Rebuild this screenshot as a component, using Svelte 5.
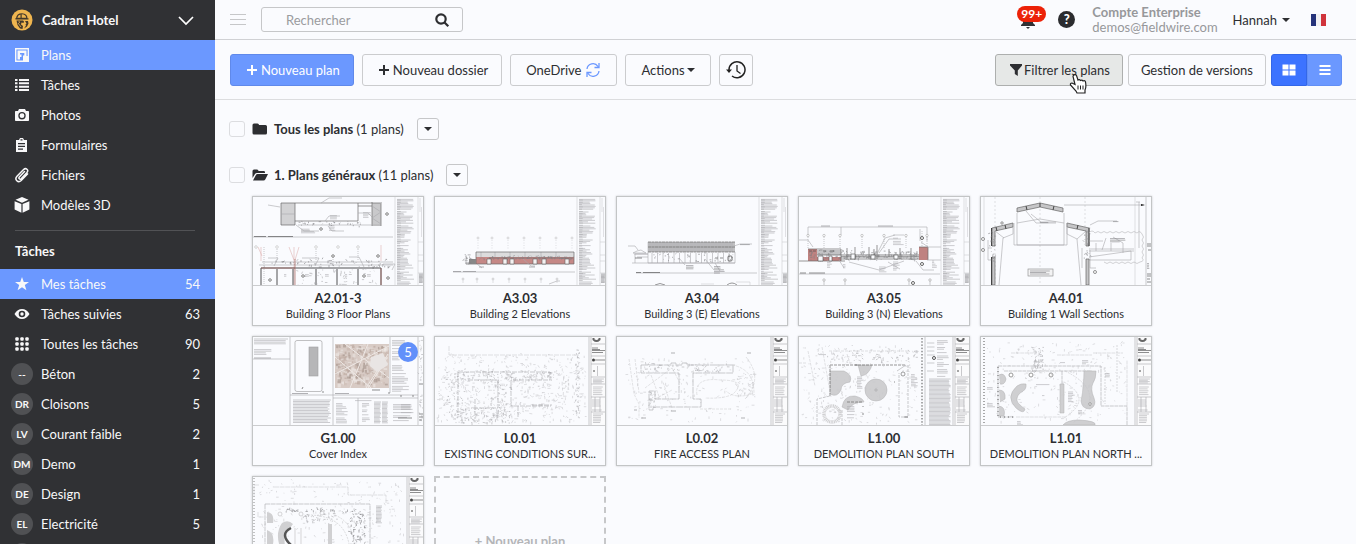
<script>
  const nav = [
    { icon: 'plan', label: 'Plans', active: true },
    { icon: 'list', label: 'Tâches' },
    { icon: 'camera', label: 'Photos' },
    { icon: 'clipboard', label: 'Formulaires' },
    { icon: 'clip', label: 'Fichiers' },
    { icon: 'cube', label: 'Modèles 3D' }
  ];

  const tasks = [
    { icon: 'star', label: 'Mes tâches', count: 54, active: true },
    { icon: 'eye', label: 'Tâches suivies', count: 63 },
    { icon: 'grid', label: 'Toutes les tâches', count: 90 },
    { tag: '--', label: 'Béton', count: 2 },
    { tag: 'DR', label: 'Cloisons', count: 5 },
    { tag: 'LV', label: 'Courant faible', count: 2 },
    { tag: 'DM', label: 'Demo', count: 1 },
    { tag: 'DE', label: 'Design', count: 1 },
    { tag: 'EL', label: 'Electricité', count: 5 },
    { tag: '', label: '', count: '' }
  ];

  const sheets = [
    { code: 'A2.01-3', name: 'Building 3 Floor Plans', art: 'floor' },
    { code: 'A3.03', name: 'Building 2 Elevations', art: 'elev2' },
    { code: 'A3.04', name: 'Building 3 (E) Elevations', art: 'elev3e' },
    { code: 'A3.05', name: 'Building 3 (N) Elevations', art: 'elev3n' },
    { code: 'A4.01', name: 'Building 1 Wall Sections', art: 'wall' },
    { code: 'G1.00', name: 'Cover Index', art: 'cover', badge: 5 },
    { code: 'L0.01', name: 'EXISTING CONDITIONS SUR...', art: 'survey' },
    { code: 'L0.02', name: 'FIRE ACCESS PLAN', art: 'fire' },
    { code: 'L1.00', name: 'DEMOLITION PLAN SOUTH', art: 'south' },
    { code: 'L1.01', name: 'DEMOLITION PLAN NORTH ...', art: 'north' },
    { code: '', name: '', art: 'east' }
  ];

  function random(seed) {
    let s = seed;
    return () => {
      s = (s * 16807) % 2147483647;
      return s / 2147483647;
    };
  }

  // Rows of small print with ragged right edges and paragraph breaks.
  function print(x, y, w, h, seed = 7, step = 1.6, ragged = 0.6) {
    const r = random(seed * 911);
    let d = '';
    for (let cy = y; cy < y + h; cy += step) {
      if (ragged > 0.3 && r() < 0.1) continue;
      const len = w * (1 - ragged * r());
      d += `M${x} ${cy.toFixed(1)}h${len.toFixed(1)}`;
    }
    return d;
  }

  // Short survey strokes spread over a rectangle.
  function strokes(x, y, w, h, n, seed, size = 3) {
    const r = random(seed * 1373);
    let d = '';
    for (let i = 0; i < n; i++) {
      const px = x + r() * w;
      const py = y + r() * h;
      const a = r() < 0.6 ? (r() < 0.5 ? 0 : Math.PI / 2) : r() * 6.3;
      const l = size * (0.2 + r() * 0.8);
      d += `M${px.toFixed(1)} ${py.toFixed(1)}l${(Math.cos(a) * l).toFixed(1)} ${(Math.sin(a) * l).toFixed(1)}`;
    }
    return d;
  }

  function blocks(x, y, w, h, n, seed) {
    const r = random(seed * 577);
    const tones = ['#b5a198', '#e9e2df', '#c6b4ab', '#f0ebe8', '#a3928a', '#d9cac3'];
    return Array.from({ length: n }, (_, i) => ({
      x: x + r() * (w - 4),
      y: y + r() * (h - 4),
      w: 1 + r() * 3,
      h: 1 + r() * 3,
      fill: tones[i % tones.length]
    }));
  }

  const aerial = blocks(82, 7, 54, 44, 340, 5);
</script>

{#snippet icon(name)}
  <svg class="icon" viewBox="0 0 16 16" width="16" height="16" aria-hidden="true">
    {#if name === 'plan'}
      <path fill="none" stroke="currentColor" stroke-width="1.400" d="M1.700 1.700h12.600v12.600H1.700z" />
      <path fill="currentColor" d="M3.500 3.500h9v5.500h2v5.500H9V8.500h1.300V6H6v1.500h1.500V10H6v2.500H3.500z" />
    {:else if name === 'list'}
      <path fill="currentColor" d="M1 2h2.500v2H1zM5 2h10v2H5zM1 5.300h2.500v2H1zM5 5.300h10v2H5zM1 8.700h2.500v2H1zM5 8.700h10v2H5zM1 12h2.500v2H1zM5 12h10v2H5z" />
    {:else if name === 'camera'}
      <path fill="currentColor" fill-rule="evenodd" d="M5 2h6l1 2h2.200q.8 0 .8.800v8.400q0 .8-.8.800H1.800q-.8 0-.8-.8V4.800q0-.8.8-.8H4zM8 5a3.700 3.700 0 1 0 0 7.400A3.700 3.700 0 1 0 8 5zm0 1.300a2.400 2.400 0 1 1 0 4.800 2.400 2.400 0 1 1 0-4.800z" />
    {:else if name === 'clipboard'}
      <path fill="currentColor" fill-rule="evenodd" d="M2 3h3l1-2h3l1 2h3v12H2zM4 6v1.200h7V6zM4 8.700v1.200h7V8.700zM4 11.500v1.200h5v-1.200zM6.500 2.200v1.300h2V2.200z" />
    {:else if name === 'clip'}
      <path fill="none" stroke="currentColor" stroke-width="1.500" stroke-linecap="round" d="M10.500 4.500 5.300 10c-1.100 1.300.6 2.900 1.800 1.700L13 5.500c2-2.300-1-5.300-3.400-3L3 9.300c-3 3.300 1.200 7 4.200 4.200l6.300-6.600" />
    {:else if name === 'cube'}
      <path fill="currentColor" d="m8 0 6.500 2.700L8 5.700 1.500 2.700zM.6 4.200 7.400 7v8.800L.6 12.600zM15.400 4.200 8.600 7v8.800l6.800-3.200z" />
    {:else if name === 'star'}
      <path fill="currentColor" d="m8 1 1.800 4.900h5.200l-4.200 3.200 1.600 5.200L8 11.200l-4.400 3.100 1.600-5.200L1 5.900h5.200z" />
    {:else if name === 'eye'}
      <path fill="currentColor" fill-rule="evenodd" d="M.5 8Q3.500 3 8 3t7.500 5Q12.500 13 8 13T.5 8zM8 4.700a3.300 3.300 0 1 0 0 6.600 3.300 3.300 0 1 0 0-6.600zm0 1.600a1.700 1.700 0 1 1 0 3.400 1.700 1.700 0 1 1 0-3.400z" />
    {:else if name === 'grid'}
      {#each [3, 8, 13] as x}{#each [3, 8, 13] as y}<rect x={x - 1.700} y={y - 1.700} width="3.400" height="3.400" rx="1" fill="currentColor" />{/each}{/each}
    {:else if name === 'plus'}
      <path fill="currentColor" d="M7 3h2v4h4v2H9v4H7V9H3V7h4z" />
    {:else if name === 'sync'}
      <g fill="none" stroke="#6b98ff" stroke-width="1.300"><path d="M2 7a6 6 0 0 1 11-2.500M14 1v4.500H9.500M14 9a6 6 0 0 1-11 2.500M2 15v-4.500h4.500" /></g>
    {:else if name === 'funnel'}
      <path fill="currentColor" d="M2 2h12v1.500L9.800 8.500V14l-3-2V8.500L2 3.500z" />
    {:else if name === 'folder'}
      <path fill="currentColor" d="M.5 4q0-1.500 1.500-1.500h3.500Q7 2.500 7 4h6.500Q15 4 15 5.500V12q0 1.500-1.500 1.500H2Q.5 13.500.5 12z" />
    {:else if name === 'folder-open'}
      <path fill="currentColor" d="M.5 11V4q0-1.500 1.500-1.500h3Q6.500 2.500 6.500 4h5.300q1.200 0 1.200 1.200V6H5Q3.700 6 3 7zM1 13.500l2.800-5.300q.6-1.200 1.700-1.200H16l-2.600 5.300q-.6 1.200-1.900 1.200z" />
    {:else if name === 'search'}
      <g fill="none" stroke="currentColor" stroke-width="2.200"><circle cx="7" cy="7" r="4.700" /><path d="m10.300 10.300 4 4" /></g>
    {:else if name === 'tiles'}
      <path fill="currentColor" d="M1.500 2.500h6v5h-6zM8.500 2.500h6v5h-6zM1.500 8.500h6v5h-6zM8.500 8.500h6v5h-6z" />
    {:else if name === 'rows'}
      <path fill="currentColor" d="M2.500 3h11v2h-11zM2.500 7h11v2h-11zM2.500 11h11v2h-11z" />
    {/if}
  </svg>
{/snippet}

{#snippet archMargin()}
  <path class="ln" d="M142 0v88M165 0v88" />
  <path class="tx" d={print(144, 1, 17, 87, 3, 1.400, 0.65)} />
  <path class="tx" d={print(144, 3, 4, 82, 11, 2.300, 0.3)} />
  <path class="tx dark" d={print(166, 77, 4, 9, 4, 1.200, 0.1)} />
  <path class="ln" d="M165 45h5M165 58h5M165 64h5M165 76h5M167 1v14M168.500 10v30" />
{/snippet}

{#snippet landMargin()}
  <rect x="154" width="16" height="88" fill="#fbfbfc" />
  <path class="ln mid" d="M154 0v88M156 0v88M156 7h14M156 19h14M156 27h14M156 40h14M156 47h14M156 60h14M156 75h14M162.500 29v10M160 60v15M165 60v15" />
  <path stroke="#666" stroke-width="2" fill="none" d="M158.500 1v1.500q3 3 6 0V1" />
  <path class="tx black" d="M157 11h6M157 12.500h8M157 13.500h13M157 15.500h11M160 23h10" />
  <circle cx="158.500" cy="23" r="1.500" fill="#444" />
  <circle cx="159" cy="34" r="1" fill="#888" />
  <path class="tx" d={print(158, 42, 11, 5, 6, 1.300, 0.2)} />
  <path class="tx" d={print(158, 50, 10, 8, 9, 1.900, 0.3)} />
  <path class="tx" d={print(157, 61, 12, 13, 8, 2, 0.4)} />
  <path class="tx" d={print(158, 77, 10, 9, 2, 1.700, 0.3)} />
{/snippet}

{#snippet drawing(art)}
  <svg class="art" viewBox="0 0 170 88" preserveAspectRatio="xMidYMid slice" aria-hidden="true">
    {#if art === 'floor'}
      <rect x="28" y="6" width="14" height="22" fill="#d2d2d4" />
      <rect x="119" y="6" width="9" height="23" fill="#c9c9cb" />
      <path class="dk" d="M28 6h99M28 6v22h14V6M42 24h63V6M105 9h14M128 5v24M119 5v24" />
      <path class="ln mid" d="M28 17h14M45 28h82M68 6l8-5h13M15 8l12 2M105 16h10l4 4M43 28l8 6h15M72 24l4-5h11M75 29l4 5h12M119 9l9 6-9 6 9 6" />
      <path class="tx" d={print(48, 31, 16, 5, 5, 1.200) + print(76, 27, 11, 8, 8) + print(77, 17, 12, 5, 2) + print(110, 14, 8, 8, 3)} />
      <path class="ln mid" d="M0 40h140" />
      <path class="tx black" d="M1 39.500h12M15 39.500h25" />
      <path class="tx dark" d={strokes(44, 24, 64, 5, 34, 9, 2)} />
      <g class="ln mid" stroke-dasharray="1 1"><path d="M24 50v13M63 50v13M80 58v12M105 50v13M11 50v38" /></g>
      <g fill="#fff" stroke="#999" stroke-width=".4"><circle cx="3" cy="50" r="1.300" /><circle cx="24" cy="50" r="1.300" /><circle cx="63" cy="50" r="1.300" /><circle cx="85" cy="50" r="1.300" /><circle cx="105" cy="50" r="1.300" /></g>
      <path fill="none" stroke="#dfb3b1" stroke-width=".6" d="M5 50l4 9M8 50v14M36 50l5 13M41 50v38M46 50l-4 13M128 48v16" />
      <path class="ln mid" d="M9 65h131M6 68h134M15 61h10l-4 8M49 61h17l-4 8M96 60h10l5 10M130 67h12l-3 6" />
      <path class="tx dark" d={strokes(8, 62, 130, 8, 60, 21, 3)} />
      <path class="heavy" d="M8 88V71h120v17M24 72v16M40 72v16M63 72v16M84 72v16M105 72v16" />
      <path fill="none" stroke="#a56460" stroke-width=".7" d="M42 62v26M8 71h34M128 71v17" />
      <path class="tx" d={print(31, 76, 4, 4, 2) + print(52, 76, 4, 4, 3) + print(72, 76, 5, 4, 4) + print(92, 76, 4, 4, 5) + print(114, 76, 4, 4, 6) + strokes(44, 72, 80, 16, 50, 14, 3)} />
      {#each [[17, 83], [50, 79], [68, 32], [80, 59], [111, 79], [125, 59], [134, 17], [135, 81]] as [x, y]}
        <path d="M{x - 1.500} {y}l1.500-1.500 1.500 1.500-1.500 1.500z" fill="#fff" stroke="#555" stroke-width=".9" />
      {/each}
      {@render archMargin()}
    {:else if art === 'elev2'}
      <path class="ln" stroke-dasharray="1 1.500" d="M43 43v10M57 43v10M73 43v10M89 43v10M105 43v10M121 43v10M137 43v10" />
      <g fill="#fff" stroke="#b3b3b5" stroke-width=".5">{#each [43, 57, 73, 89, 105, 121, 137] as x}<circle cx={x} cy="41" r="1" /><circle cx={x - 15} cy="82" r="1" />{/each}</g>
      <path class="ln" d="M28 81v5M42 81v5M58 81v5M74 81v5M90 81v5M106 81v5M122 81v5" />
      <rect x="41" y="55" width="98" height="5" fill="#dcdcdd" />
      <path class="tx" d="M46 55v5M60 55v5M75 55v5M90 55v5M106 55v5M121 55v5" />
      <rect x="41" y="60" width="98" height="7" fill="#c58886" />
      <path class="dk" d="M41 55h98v12H31M41 55v12M54 61h84" />
      <rect x="34" y="62" width="7" height="5" fill="#888" />
      <path class="tx dark" d={strokes(41, 59, 97, 3, 85, 8, 2) + strokes(29, 55, 7, 11, 16, 6, 3)} />
      {#each [52, 68, 75, 98, 107, 130] as x}<path d="M{x} 62h4v5h-4z" fill="#f5f1f1" stroke="#666" stroke-width=".6" />{/each}
      <path class="ln mid" d="M18 75h122M42 67l5 4M88 62l8 7h4M114 87l8-3h3M31 58v9" />
      <path class="tx dark" d="M18 74.500h8M28 74.500h13M44 70h5M94 70h6" />
      {@render archMargin()}
    {:else if art === 'elev3e'}
      <rect x="31" y="45" width="87" height="10" fill="#c0c0c2" />
      <path stroke="#a2a2a4" stroke-width=".5" d={Array.from({ length: 43 }, (_, i) => `M${31 + i * 2} 45v10`).join('')} />
      <path class="dk" stroke-dasharray="3 .5" d="M31 45h87M31 55h87M31 50h87" />
      <path class="ln mid" d="M31 55v11h87V55M15 66h103M18 66V57h13M17 57h14M20 60h11M16 56h13l-5-3-4 1z" />
      <path class="ln mid" d={Array.from({ length: 15 }, (_, i) => `M${35 + i * 5.500} 56v10`).join('')} />
      <path class="tx dark" d={strokes(33, 56, 84, 9, 42, 15, 2)} />
      <path class="tx black" d="M98 61h3M103 61h3M18 61h7" />
      <rect x="111" y="59" width="4" height="5" rx="1" fill="none" stroke="#555" stroke-width=".8" />
      <path class="ln mid" d="M19 76h121M21 53l-3-4h-7M114 50l9-3h12M62 61l6 7M88 62l9 11M98 66l5 8" />
      <path class="tx dark" d={print(69, 67, 10, 5, 4) + print(97, 68, 12, 9, 5) + print(123, 46, 14, 3, 7)} />
      <path class="tx black" d="M19 75.500h5M26 75.500h17" />
      <path class="dk" d="M38 88q5-3 10 0M110 88q5-4 10 0" />
      <path class="ln" d="M84 87h13M119 85h14v3" />
      {@render archMargin()}
    {:else if art === 'elev3n'}
      <path class="ln mid" d="M9 38v-8h119v14M42 30v8M121 44V32" />
      <path class="tx dark" d="M22 29h9M79 29h15" />
      <path class="ln mid" stroke-dasharray="1 1" d="M9 40v12M25 40v12M41 40v12M63 40v12M85 40v12M107 40v12M123 34v18M128 40v12" />
      <g fill="#fff" stroke="#999" stroke-width=".5">{#each [9, 25, 41, 63, 85, 107, 128] as x}<circle cx={x} cy="38.500" r="1.200" />{/each}</g>
      <path fill="#bf8280" d="M9 52h9v12H9zM18 60h24v4H18zM120 50h9v13h-9z" />
      <path fill="#c3c3c5" d="M18 53h24v5H18zM42 57h78v3H42z" />
      <path class="dk" d="M0 64h46M9 52h33v12M18 58h24M42 62h78M120 50h9v13M42 60h78" />
      <path class="dk" d="M48 51v12M56 50v13M70 50v12M75 52v10M78 48v14M90 52v8M101 51v11M112 51v11" />
      <path class="tx dark" d={strokes(44, 54, 76, 9, 110, 25, 3) + strokes(8, 53, 34, 10, 40, 12, 3)} />
      <g fill="#fafbfe" stroke="#555" stroke-width=".6"><path d="M19 59h5v5h-5zM30 59h3v5h-3zM52 57h4v5h-4zM72 58h4v4h-4zM95 58h4v4h-4z" /></g>
      <path class="ln mid" d="M0 43h9l5 7M76 61l10-20 10-3M80 56l10-14h12M50 65l30 8 25-9M40 63l5 8M89 65l12 7M117 64l7 9h11M122 45l7 5M128 50h14M128 63h14M0 77h141" />
      <path class="tx" d={print(94, 38, 12, 11, 17) + print(80, 70, 8, 5, 16) + print(28, 64, 5, 7, 15) + print(44, 66, 5, 6, 8) + print(94, 65, 7, 8, 15) + print(133, 64, 5, 7, 18)} />
      <path class="tx black" d="M1 76h6M10 76h16M10 54h3M14 54h3M31 54h4M24 54h3" />
      <g fill="#fff" stroke="#555" stroke-width=".9"><circle cx="123" cy="41" r="1.500" /><circle cx="114" cy="86" r="1.500" /><circle cx="123" cy="67" r="1.500" /></g>
      <path class="ln mid" d="M25 83v5M46 83v5M110 83v5M131 83v5" />
      <g fill="#fff" stroke="#888" stroke-width=".5">{#each [25, 46, 110, 131] as x}<circle cx={x} cy="83" r="1.200" />{/each}</g>
      {@render archMargin()}
    {:else if art === 'wall'}
      <path class="ln" d="M3 0v88M154 0v88" />
      <path class="ln" stroke-dasharray="2 2" d="M14 0v88M59 0v88M104 0v30" />
      <path fill="#c6c6c8" stroke="#666" stroke-width=".7" d="M11 88V60h3v28zM11 49V31l21-5v4l-18 4v15zM36 11l23-5 23 5v4L59 10l-23 5zM86 26l22 5v18h-3V34l-19-4zM105 62h3v26h-3z" />
      <path stroke="#444" d="M10.500 31v18M10.500 60v28M108 31v18M15 30l1 4M24 28l1 4M45 9l1 4M59 6v4M73 9l-1 4M97 28l-1 4" />
      <path class="ln mid" d="M36 16v32h47V16M36 26l23-4 24 4M33 26v22h53V26M32 30v7l-10 4-4 47M86 30v7l10 5 4 46M14 34l9 7M105 34l-9 8M50 17l10 8h15M45 14l10 12h20" />
      <path class="tx dark" d={print(59, 24, 10, 3, 12) + strokes(9, 29, 6, 35, 30, 2, 2) + strokes(103, 30, 6, 34, 30, 3, 2)} />
      <rect x="47" y="72" width="25" height="7" fill="#f3f3f4" stroke="#888" stroke-width=".6" />
      <path class="tx dark" d={print(49, 74, 20, 4, 6, 1.500, 0.2)} />
      <path fill="none" stroke="#b5b5b8" stroke-width=".6" d="M108 36q3-4 6 0q3-3 6 0q3-3 6 0q3-3 6 0q3-3 6 0q3-3 6 0q3-3 6 0q3-3 6 0q3-3 5 1q3 3 0 6q3 3 0 6q3 3 0 6q3 3 0 6q3 3-2 4q-3 3-6 0q-3 3-6 0q-3 3-6 0q-3 3-6 0q-3 3-6 0q-3 3-6 0" />
      <path class="ln mid" d="M83 8h80M108 52h45M108 54h45" />
      <path class="ln mid" d="M108 60l42-6M108 63h42v-9M108 44h14M132 40l10 6v10M125 41l-4 12M109 28l8-4h19M7 43v20h3M7 51h4M109 53v18h6M101 51v20M115 46v8M130 46v8M155 5h4M158 5v46" />
      <path class="tx dark" d={print(129, 40, 17, 7, 9) + print(132, 23, 12, 2, 11)} />
      <g fill="#fff" stroke="#666" stroke-width=".7"><circle cx="2" cy="42" r="1.500" /><circle cx="2" cy="53" r="1.500" /><circle cx="114" cy="75" r="1.500" /><circle cx="21" cy="26" r="1.200" /></g>
      <path d="m160 7 4 1-4 1z" fill="#222" />
      <path class="ln mid" d="M165 0v88" />
      <path class="tx black" d="M166 47h4M166 49h4M167 53h3M166 77h4M166 79h4M166 82h3M166 85h4" />
      <path class="tx dark" d={print(166, 65, 4, 9, 8)} />
    {:else if art === 'cover'}
      <path class="ln mid" d="M37 0v88M80 0v88M137 0v56M0 22h37M37 58h128M165 0v88M80 61h85M105 61v27" />
      <path class="tx" d={print(1, 2, 34, 6, 2, 1.600, 0.1) + print(1, 11, 18, 8, 3, 1.600) + print(40, 63, 38, 24, 4, 1.500, 0.1)} />
      <path class="tx dark" d="M1 21h17M39 56.500h16M82 56.500h14" />
      <rect x="42" y="3.500" width="27" height="51" rx="2" fill="none" stroke="#999" stroke-width=".6" />
      <rect x="56" y="10" width="9" height="29" fill="#b6b6b8" stroke="#a0a0a2" stroke-width=".6" />
      <path class="tx black" d="M49 52l1-2M69 55h2" />
      <rect x="82" y="7" width="54" height="44" fill="#d8cbc5" />
      {#each aerial as b}<rect x={b.x} y={b.y} width={b.w} height={b.h} fill={b.fill} opacity=".6" />{/each}
      <path stroke="#eee8e5" fill="none" d="M82 37l54-28M97 51l18-44M113 51l22-34M82 20l36 31M92 7l44 34M115 51l19-30" />
      <path fill="#e9e5e4" d="m118 20 12-4 5 12-11 7-7-6z" />
      <path class="tx black" d="M119 53h8M135 56h2" />
      <path class="tx" d={print(139, 2, 14, 22, 6) + print(139, 27, 20, 28, 8) + print(83, 65, 12, 22, 5) + print(102, 62, 18, 3, 6) + print(109, 65, 8, 21, 9) + print(121, 65, 7, 22, 4, 1.300, .2) + print(129, 65, 6, 22, 10, 1.300, .2) + print(140, 66, 20, 18, 6) + print(148, 66, 16, 11, 2) + strokes(166, 1, 3, 83, 40, 3, 2)} />
      <path class="tx black" d="M148 58v2M160 58v2M166 77h4M166 80h4M166 83h3M166 47h4M145 81h14" />
    {:else if art === 'survey'}
      <path class="tx light" d={strokes(2, 17, 148, 68, 470, 31, 3) + strokes(15, 35, 120, 50, 160, 45, 4)} />
      <path class="tx" d={strokes(9, 32, 20, 54, 75, 32, 2) + strokes(55, 34, 22, 48, 75, 36, 2) + strokes(140, 12, 5, 70, 65, 37, 2) + strokes(22, 34, 93, 9, 70, 38, 3) + strokes(24, 71, 50, 15, 85, 47, 3)} />
      <path class="ln mid" stroke-dasharray="5 1" d="M23 35h92v8H76v26h40M23 35v43M33 43h30v28H36M40 62v20M83 69v12M97 68h20" />
      <path class="ln" stroke-dasharray="5 1" d="M14 9v9h130" />
      {@render landMargin()}
    {:else if art === 'fire'}
      <path class="ln mid" stroke-dasharray="7 .7" d="M24 28h30v-2h5v2h6v-2h5v2h46v8H76v26h8v8H36v3h-4V54h6v8h24V36H24z" />
      <g fill="none" stroke="#c9c9cb" stroke-width=".5" stroke-dasharray="3 1"><path d="M12 22l5 35 5 10v14M18 22l4 34M28 51l27-20 8 15M38 62l17-9M80 58q-3-18 23-15 28 0 13 14-9 5-28 4M115 28q22 4 22 28-18 7-28-2M129 20q18 22-1 42M34 38l9 24M55 71l-9-26M83 72h32" /></g>
      <path class="tx light" d={strokes(10, 20, 130, 65, 170, 30, 3) + strokes(120, 36, 18, 24, 45, 17, 3)} />
      <path class="tx" d={strokes(25, 26, 86, 9, 55, 32, 3) + strokes(32, 54, 6, 17, 22, 13, 3)} />
      <path class="tx dark" d="M54 16h4M130 16h4M24 81h5M54 74h5M124 81h4M17 73h3" />
      {@render landMargin()}
    {:else if art === 'south'}
      <g fill="#cfcfd1" stroke="#b0b0b2" stroke-width=".5"><path d="M31 34h14q9 4 6 11-9 1-9 8-4 8-11 4zM59 28h14q-3 10-11 11zM43 70q2-12 13-11 8 2 9 6-12 0-16 8z" /><circle cx="77" cy="53" r="11" /></g>
      <path class="dk" stroke-dasharray="3 1" d="M31 28h75M31 28v32M48 65h16" />
      <path class="ln" stroke-dasharray="3 1" d="M23 10l9 50M9 14l7 35M0 26h8M30 14h80M48 17l4 12M80 17l5 12" />
      <path class="ln mid" stroke-dasharray="3 1" d="M109 28v52h-9V36M18 88V62l13-3M43 88V73" />
      <path class="tx light" d={strokes(2, 8, 116, 78, 260, 35, 3)} />
      <path class="tx" d={strokes(28, 12, 89, 12, 65, 38, 3) + print(58, 40, 7, 12, 15) + print(48, 68, 8, 13, 6) + print(112, 36, 7, 14, 5) + print(20, 16, 8, 3, 9)} />
      <circle cx="33" cy="77" r="8" fill="none" stroke="#d0d0d2" stroke-width="3.500" stroke-dasharray="1 .6" />
      <circle cx="104" cy="37" r="2" fill="none" stroke="#777" stroke-width=".7" />
      <path stroke="#555" stroke-dasharray="1.500 1.700" d="M123 1v87" />
      <path class="ln mid" d="M77 51v4M75 53h4M98 34l9-6M126 0v88" />
      <path class="tx black" d={print(48, 64, 16, 1, 2) + 'M56 28h3M64 69v1M64 76v2M109 80h-4M95 45h1'} />
      <path class="tx" d={print(128, 2, 8, 34, 6, 4) + print(138, 2, 12, 38, 9, 1.700)} />
      <circle cx="135" cy="21" r="1.500" fill="none" stroke="#555" />
      <path class="tx mid" d={print(130, 42, 22, 46, 13, 1.300, 0.12)} />
      {@render landMargin()}
    {:else if art === 'north'}
      <path stroke="#555" stroke-dasharray="1 2" d="M3 1v87" />
      <path class="ln mid" stroke-dasharray="4 .6" d="M17 29h103v40h26v19M17 29v51h16M23 34h88M81 34v42" />
      <path class="ln" stroke-dasharray="4 .6" d="M30 16h23V10M76 18h35M112 16h30M146 69V23M35 80h50" />
      <path stroke="#666" stroke-dasharray="1 3" d="M17 30v50h16" />
      <g fill="#cfcfd1" stroke="#b0b0b2" stroke-width=".5"><path d="M45 47q-5-1-9 2-12 11-1 22 8 7 9 1-3-2-7-6-3-5 2-10 7-3 6-9zM103 34h12q0 8-3 12-3 6 1 15 3 8-4 11-8 0-9-8 2-9 2-15 1-7 1-15zM79 47h4v29h-4zM82 88q4-5 16-5 18 1 16 5zM18 38q5-3 7 4-1 6-6 5M18 53q7 0 6 9l-5 3M18 69q7 1 5 10h-5" /></g>
      <g fill="#fff" stroke="#999"><circle cx="30" cy="38" r="2" /><circle cx="50" cy="38" r="2" /><circle cx="70" cy="38" r="2" /><circle cx="109" cy="67" r="1.300" /></g>
      <path class="tx light" d={strokes(6, 4, 139, 80, 240, 34, 3)} />
      <path fill="none" stroke="#c5c5c7" stroke-width=".6" stroke-dasharray="2 1" d="M83 45q30 17 0 36M84 34q45 22 8 52M124 30v37M136 8v48" />
      <path class="tx" d={print(87, 55, 7, 11, 15) + print(55, 46, 18, 2, 4) + print(6, 49, 8, 4, 7) + print(61, 57, 5, 3, 8) + print(101, 22, 7, 5, 9) + print(124, 35, 7, 6, 10) + print(36, 83, 8, 5, 11) + print(79, 24, 6, 3, 12) + strokes(50, 10, 12, 25, 60, 20, 3) + print(6, 65, 8, 5, 7) + print(97, 72, 7, 6, 2)} />
      {@render landMargin()}
    {:else}
      <path stroke="#888" stroke-dasharray="1 2" d="M1 1v87" />
      <path class="ln mid" stroke-dasharray="5 .6" d="M12 27h105v61M12 27v61" />
      <path class="ln" stroke-dasharray="5 .6" d="M21 10h74v8h38v8M6 8H1v12M5 35v5h6" />
      <path class="tx light" d={strokes(5, 3, 146, 83, 290, 42, 3)} />
      <path fill="#d0d0d2" d="M29 46q6-4 11 1l-3 4q-7 2-5 19h-5q-5-14 2-24zM14 35q8 1 6 11h-6M14 53q8 3 6 14h-6M75 47h4v24h-4z" />
      <path fill="none" stroke="#555" stroke-width="2.500" d="M38 51q-12 6 0 17" />
      <g fill="none" stroke="#c4c4c6" stroke-width=".7"><path d="M42 51v19M48 51v17" /><circle cx="27" cy="37" r="2" /><circle cx="48" cy="37" r="2" /><circle cx="69" cy="36" r="2" /></g>
      <path class="tx dark" d={strokes(97, 32, 15, 42, 75, 33, 3) + strokes(33, 32, 75, 3, 35, 34, 3)} />
      <path class="tx" d={print(123, 29, 6, 18, 5, 1.400, 0.2) + strokes(50, 35, 34, 9, 35, 44, 3)} />
      <path fill="none" stroke="#c6c6c8" stroke-dasharray="2 1" stroke-width=".6" d="M55 38q40 0 42 37M82 38q22 10 18 36" />
      {@render landMargin()}
    {/if}
  </svg>
{/snippet}

<div class="app">
  <aside class="sidebar">
    <button class="project">
      <svg viewBox="0 0 22 22" width="22" height="22" aria-hidden="true">
        <circle cx="11" cy="11" r="10.500" fill="#efb54f" />
        <path fill="#43382a" d="M4.500 10.500h13V9.300h-1Q16.500 4.500 11 4.200 5.500 4.300 5 9.300h-.8zM5.500 11.500 6.500 16l2.500 3.500 2.500.5.500-3-2-1.500.5-2 2 .5.500-1.500-1-1zM14 12l1.500 2.500-1 1 .5 1-2 3 3-2 1.500-3-.5-2.500z" />
        <path fill="#efb54f" d="M6.300 8.800Q7 5.800 9.500 5.400v3.400zM10.700 5.300q4.200 0 4.500 3.500h-4.500z" />
        <path fill="none" stroke="#efb54f" stroke-width=".8" d="m7 14 3 4M8 12l.5 2" />
      </svg>
      <span class="project-name">Cadran Hotel</span>
      <svg viewBox="0 0 16 16" width="16" height="16" aria-hidden="true"><path d="m1 5 7 7 7-7" fill="none" stroke="#fff" stroke-width="1.700" /></svg>
    </button>
    <nav>
      {#each nav as item}
        <a class="item" class:active={item.active} href="#{item.icon}">
          <span class="slot">{@render icon(item.icon)}</span>
          <span class="label">{item.label}</span>
        </a>
      {/each}
    </nav>
    <hr />
    <h2>Tâches</h2>
    <nav>
      {#each tasks as item, i}
        <a class="item" class:active={item.active} href="#liste-{i}">
          <span class="slot" class:tag={!item.icon}>{#if item.icon}{@render icon(item.icon)}{:else}{item.tag}{/if}</span>
          <span class="label">{item.label}</span>
          <span class="count">{item.count}</span>
        </a>
      {/each}
    </nav>
  </aside>

  <main>
    <header>
      <button class="bare burger" aria-label="Menu">
        <svg viewBox="0 0 16 12" width="16" height="12"><path d="M0 .5h16M0 5.500h16M0 10.500h16" stroke="#c6c7c9" /></svg>
      </button>
      <div class="search">
        <input type="text" placeholder="Rechercher" aria-label="Rechercher" />
        <button class="bare" aria-label="Lancer la recherche">{@render icon('search')}</button>
      </div>
      <div class="account">
        <button class="bare bell" aria-label="Notifications">
          <svg viewBox="0 0 16 16" width="16" height="16"><path fill="#303134" d="M3 2h10v7l2 2v1H1v-1l2-2zM6 13h4l-2 2z" /></svg>
          <span class="alert">99+</span>
        </button>
        <button class="bare help" aria-label="Aide">?</button>
        <div class="plan-info">
          <strong>Compte Enterprise</strong>
          <span>demos@fieldwire.com</span>
        </div>
        <button class="bare user">Hannah <i class="caret"></i></button>
        <svg class="flag" viewBox="0 0 15 12" width="15" height="12" aria-hidden="true">
          <rect width="5" height="12" fill="#26337a" /><rect x="5" width="5" height="12" fill="#f1f1f3" /><rect x="10" width="5" height="12" fill="#d0343c" />
        </svg>
      </div>
    </header>

    <div class="toolbar">
      <button class="btn create primary">{@render icon('plus')}Nouveau plan</button>
      <button class="btn create">{@render icon('plus')}Nouveau dossier</button>
      <button class="btn onedrive">OneDrive {@render icon('sync')}</button>
      <button class="btn menu">Actions<i class="caret"></i></button>
      <button class="btn square" aria-label="Historique">
        <svg viewBox="0 0 20 20" width="20" height="20"><path d="M3 10a8 8 0 1 1 3 6" fill="none" stroke="#222" stroke-width="1.500" /><path d="M11 5v6l3.500 2.500" fill="none" stroke="#222" stroke-width="1.300" /><path d="M0 9.500h6L3 13z" fill="#222" /></svg>
      </button>
      <div class="right">
        <button class="btn filter">
          {@render icon('funnel')}Filtrer les plans
          <svg class="pointer" viewBox="0 0 18 20" width="18" height="20" aria-hidden="true"><path d="M5 1q1.500-1 2.500.5L9 6q1.500-1 2.500.5 1.500-1 2.500.5 2-1 2.500 1 1 5-.5 8v3H8l-1-2-5.500-6q-.5-2 1.500-2l3 1.500L4 2.500Q4 1.500 5 1z" fill="#fff" stroke="#222" stroke-width="1.200" /><path d="M9 11.500v4M11.500 11.500v4M14 11.500v4" stroke="#222" /></svg>
        </button>
        <button class="btn">Gestion de versions</button>
        <div class="toggle">
          <button class="on" aria-label="Vue en grille">{@render icon('tiles')}</button>
          <button aria-label="Vue en liste">{@render icon('rows')}</button>
        </div>
      </div>
    </div>

    <section class="content">
      <div class="folder">
        <input type="checkbox" aria-label="Tous les plans" />
        {@render icon('folder')}
        <span class="folder-name"><b>Tous les plans</b> (1 plans)</span>
        <button class="drop" aria-label="Options du dossier"><i class="caret"></i></button>
      </div>
      <div class="folder">
        <input type="checkbox" aria-label="1. Plans généraux" />
        {@render icon('folder-open')}
        <span class="folder-name"><b>1. Plans généraux</b> (11 plans)</span>
        <button class="drop" aria-label="Options du dossier"><i class="caret"></i></button>
      </div>
      <div class="cards">
        {#each sheets as sheet}
          <a class="card" href="#{sheet.art}">
            {@render drawing(sheet.art)}
            <b>{sheet.code}</b>
            <span class="sheet-name">{sheet.name}</span>
            {#if sheet.badge}<span class="badge">{sheet.badge}</span>{/if}
          </a>
        {/each}
        <button class="new-card">+ Nouveau plan</button>
      </div>
    </section>
  </main>
</div>

<style>
  :global(body) {
    font-family: Lato, "Open Sans", sans-serif;
    font-size: 13px;
    line-height: 20px;
    color: #2d2e31;
    background: #fafbfe;
  }
  .app, .app :global(*) { box-sizing: border-box; }
  .app {
    display: flex;
    height: 100vh;
    overflow: hidden;
  }
  button, input { font: inherit; color: inherit; }
  button { cursor: pointer; }
  a { color: inherit; text-decoration: none; }
  svg { display: block; flex: none; }

  .sidebar {
    flex: none;
    width: 215px;
    overflow: hidden;
    background: #303134;
    color: #f8f8f9;
  }
  .project {
    display: flex;
    align-items: center;
    gap: 9px;
    width: 100%;
    height: 40px;
    padding: 0 21px 0 11px;
    border: 0;
    background: none;
    text-align: left;
    font-weight: 700;
  }
  .project-name { flex: 1; }
  .item {
    display: flex;
    align-items: center;
    gap: 8px;
    height: 30px;
    padding: 0 15px 0 11px;
  }
  .item.active { background: #6b98ff; }
  .slot {
    display: grid;
    place-items: center;
    flex: none;
    width: 22px;
    height: 22px;
  }
  .tag {
    border-radius: 50%;
    background: #505154;
    font-size: 10px;
    font-weight: 700;
  }
  .label { flex: 1; }
  hr {
    margin: 10px 20px 0 15px;
    border: 0;
    border-top: 1px solid #515255;
  }
  h2 {
    margin: 0;
    padding: 10px 15px 8px;
    font-size: 13px;
    line-height: 20px;
  }

  main {
    flex: 1;
    min-width: 0;
    display: flex;
    flex-direction: column;
  }
  header {
    display: flex;
    align-items: center;
    flex: none;
    height: 40px;
    padding: 0 30px 0 15px;
    border-bottom: 1px solid #d0d1d4;
  }
  .bare {
    padding: 0;
    border: 0;
    background: none;
  }
  .burger { margin-right: 15px; }
  .search {
    display: flex;
    align-items: center;
    width: 202px;
    height: 25px;
    padding: 0 12px 0 24px;
    border: 1px solid #c6c7c9;
    border-radius: 3px;
  }
  .search input {
    flex: 1;
    min-width: 0;
    padding: 0;
    border: 0;
    outline: 0;
    background: none;
  }
  .search input::placeholder { color: #9b9c9f; opacity: 1; }
  .account {
    display: flex;
    align-items: center;
    margin-left: auto;
  }
  .bell {
    position: relative;
    padding-top: 4px;
    margin-right: 22px;
  }
  .alert {
    position: absolute;
    top: -4px;
    left: -3px;
    height: 16px;
    padding: 0 4px;
    border-radius: 8px;
    background: #ec2208;
    color: #fff;
    font-size: 12px;
    line-height: 16px;
    font-weight: 700;
  }
  .help {
    width: 17px;
    height: 17px;
    margin-right: 17px;
    border-radius: 50%;
    background: #2b2c2f;
    color: #fff;
    font-weight: 900;
    line-height: 17px;
  }
  .plan-info {
    display: flex;
    flex-direction: column;
    margin-right: 15px;
    line-height: 15px;
    color: #97989b;
  }
  .user {
    display: flex;
    align-items: center;
    gap: 5px;
    margin-right: 21px;
  }
  .caret {
    display: inline-block;
    border: 4px solid transparent;
    border-top-color: currentColor;
    border-bottom: 0;
  }

  .toolbar {
    display: flex;
    align-items: center;
    gap: 8px;
    flex: none;
    height: 60px;
    padding: 0 14px 0 15px;
    border-bottom: 1px solid #dcdddf;
  }
  .btn {
    position: relative;
    display: flex;
    align-items: center;
    justify-content: center;
    height: 32px;
    padding: 0 15px;
    border: 1px solid #cbccce;
    border-radius: 3px;
    background: none;
    white-space: nowrap;
  }
  .btn.create { gap: 1px; padding: 0 13px; }
  .btn.primary {
    border-color: #6089ea;
    background: #6b98ff;
    color: #fff;
  }
  .btn.onedrive { gap: 4px; }
  .btn.menu { gap: 2px; }
  .btn.square { width: 34px; padding: 0; }
  .right {
    display: flex;
    gap: 5px;
    margin-left: auto;
  }
  .right .btn { padding: 0 12px; }
  .right .filter {
    border-color: #adafae;
    background: #e6e8e7;
  }
  .pointer {
    position: absolute;
    top: 19px;
    left: 73px;
  }
  .toggle { display: flex; }
  .toggle button {
    display: grid;
    place-items: center;
    width: 35px;
    height: 32px;
    padding: 0;
    border: 1px solid #628ff5;
    border-radius: 0 3px 3px 0;
    background: #6b98ff;
    color: #fff;
  }
  .toggle .on {
    width: 36px;
    border-color: #3367e8;
    border-radius: 3px 0 0 3px;
    background: #3c73ff;
  }

  .content {
    flex: 1;
    min-height: 0;
    overflow: hidden;
    padding: 18px 40px 0 14px;
  }
  .folder {
    display: flex;
    align-items: center;
    height: 22px;
    margin-bottom: 24px;
  }
  .folder + .folder { margin-bottom: 10px; }
  .folder input {
    appearance: none;
    width: 16px;
    height: 16px;
    margin: 0 7px 0 0;
    border: 1px solid #dcdde0;
    border-radius: 3px;
  }
  .folder-name { margin: 0 13px 0 6px; }
  .drop {
    display: grid;
    place-items: center;
    width: 22px;
    height: 22px;
    padding: 0;
    border: 1px solid #c6c7c9;
    border-radius: 3px;
    background: none;
  }
  .cards {
    display: grid;
    grid-template-columns: repeat(auto-fill, 172px);
    gap: 10px;
    padding-left: 23px;
  }
  .card {
    position: relative;
    display: flex;
    flex-direction: column;
    height: 130px;
    border: 1px solid #c3c5c6;
    box-shadow: 0 0 2px #c9cacc;
    text-align: center;
  }
  .card b { padding-top: 4px; line-height: 16px; }
  .sheet-name {
    padding: 0 4px;
    overflow: hidden;
    font-size: 11px;
    line-height: 16px;
    text-overflow: ellipsis;
    white-space: nowrap;
  }
  .badge {
    position: absolute;
    top: 5px;
    right: 5px;
    width: 20px;
    height: 20px;
    border-radius: 50%;
    background: #6290fa;
    color: #fff;
    line-height: 20px;
  }
  .new-card {
    height: 130px;
    padding: 0;
    border: 2px dashed #c6c7c9;
    background: none;
    color: #b4b5b8;
    font-weight: 700;
  }
  .art {
    width: 100%;
    height: 89px;
    border-bottom: 1px solid #cbccce;
    fill: none;
  }
  .ln { fill: none; stroke: #cfcfd2; stroke-width: .6; }
  .mid { stroke: #a8a8ab; }
  .dk { fill: none; stroke: #6a6a6c; stroke-width: .7; }
  .heavy { fill: none; stroke: #505052; stroke-width: 1; }
  .tx { fill: none; stroke: #ababae; stroke-width: .6; }
  .light { stroke: #c9c9cc; }
  .dark { stroke: #808083; }
  .black { stroke: #444; }
</style>
